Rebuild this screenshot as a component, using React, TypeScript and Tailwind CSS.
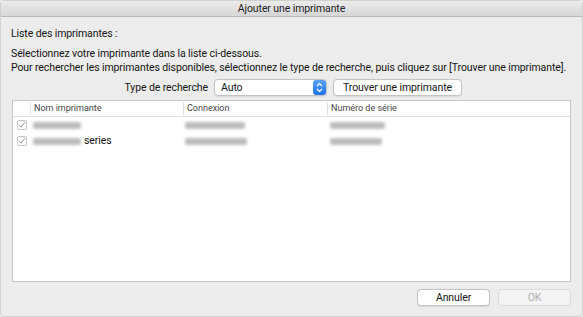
import React from "react";

function Blur({ w }: { w: number }) {
  return (
    <span
      className="inline-block h-[7px] rounded-[2px] bg-[#bdbdbd] blur-[1.5px] align-middle"
      style={{ width: w }}
    />
  );
}

function Check() {
  return (
    <span className="flex h-[10px] w-[10px] items-center justify-center rounded-[2px] border border-[#c4c4c4] bg-white">
      <svg width="8" height="8" viewBox="0 0 8 8">
        <path d="M1.2 4.2 L3 6.2 L6.8 1.2" fill="none" stroke="#8a8a8a" strokeWidth="1" />
      </svg>
    </span>
  );
}

export default function App() {
  const font = { fontFamily: 'Roboto, "Liberation Sans", Arial, sans-serif' };
  return (
    <div className="h-[317px] w-[583px] overflow-hidden bg-[#ececec] text-[#141414]" style={font}>
      <div className="flex h-[317px] flex-col rounded-[4px] border border-[#d0d0d0]">
        {/* title bar */}
        <div className="flex h-[16px] shrink-0 items-center justify-center border-b border-[#b9b9b9] bg-gradient-to-b from-[#ebebeb] to-[#d6d6d6] text-[10.5px] tracking-[-0.1px] text-[#222]">
          Ajouter une imprimante
        </div>
        <div className="flex flex-1 flex-col px-[10px] text-[10.5px] tracking-[-0.1px]">
          <div className="mt-[10px] leading-[13px]">Liste des imprimantes :</div>
          <div className="mt-[7px] leading-[14px]">
            Sélectionnez votre imprimante dans la liste ci-dessous.
          </div>
          <div className="whitespace-nowrap leading-[14px]">
            Pour rechercher les imprimantes disponibles, sélectionnez le type de recherche, puis cliquez sur [Trouver une imprimante].
          </div>
          <div className="mt-[4px] flex h-[17px] items-center">
            <span className="w-[197px] shrink-0 text-right">Type de recherche</span>
            <div className="ml-[6px] flex h-[17px] w-[113px] items-center justify-between rounded-[4px] border border-[#c3c3c3] bg-white pl-[6px] shadow-[0_0.5px_1px_rgba(0,0,0,0.08)]">
              <span>Auto</span>
              <span className="flex h-[15px] w-[13px] items-center justify-center rounded-[3px] bg-gradient-to-b from-[#5aa2f9] to-[#1d72f0]">
                <svg width="7" height="11" viewBox="0 0 7 11">
                  <path d="M1 4 L3.5 1.5 L6 4 M1 7 L3.5 9.5 L6 7" fill="none" stroke="white" strokeWidth="1.2" />
                </svg>
              </span>
            </div>
            <div className="ml-[6px] flex h-[17px] w-[129px] items-center justify-center rounded-[4px] border border-[#c3c3c3] bg-white shadow-[0_0.5px_1px_rgba(0,0,0,0.08)]">
              Trouver une imprimante
            </div>
          </div>
          {/* table */}
          <div className="ml-[1px] mt-[4px] flex h-[182px] w-[559px] flex-col border border-[#c8c8c8] bg-white tracking-normal">
            <div className="flex h-[16px] shrink-0 items-center border-b border-[#e0e0e0] text-[9px] text-[#454545]">
              <div className="w-[17px] shrink-0" />
              <div className="flex h-[13px] w-[153px] shrink-0 items-center border-l border-[#e0e0e0] pl-[3px]">Nom imprimante</div>
              <div className="flex h-[13px] w-[144px] shrink-0 items-center border-l border-[#e0e0e0] pl-[3px]">Connexion</div>
              <div className="flex h-[13px] flex-1 items-center border-l border-[#e0e0e0] pl-[3px]">Numéro de série</div>
            </div>
            <div className="flex h-[16px] items-center">
              <div className="flex w-[17px] shrink-0 justify-center pl-[1px]"><Check /></div>
              <div className="w-[153px] shrink-0 pl-[3px]"><Blur w={48} /></div>
              <div className="w-[144px] shrink-0 pl-[2px]"><Blur w={60} /></div>
              <div className="pl-[3px]"><Blur w={55} /></div>
            </div>
            <div className="flex h-[16px] items-center">
              <div className="flex w-[17px] shrink-0 justify-center pl-[1px]"><Check /></div>
              <div className="flex w-[153px] shrink-0 items-center pl-[3px]">
                <Blur w={48} />
                <span className="ml-[3px] text-[10.5px] tracking-[-0.1px] text-[#141414]">series</span>
              </div>
              <div className="w-[144px] shrink-0 pl-[2px]"><Blur w={62} /></div>
              <div className="pl-[3px]"><Blur w={52} /></div>
            </div>
          </div>
          <div className="mt-[7px] flex justify-end gap-[8px] pr-[1px]">
            <div className="flex h-[17px] w-[73px] items-center justify-center rounded-[4px] border border-[#c3c3c3] bg-white shadow-[0_0.5px_1px_rgba(0,0,0,0.1)]">
              Annuler
            </div>
            <div className="flex h-[17px] w-[73px] items-center justify-center rounded-[4px] border border-[#dadada] bg-[#f3f3f3] text-[#b0b0b0]">
              OK
            </div>
          </div>
        </div>
      </div>
    </div>
  );
}
